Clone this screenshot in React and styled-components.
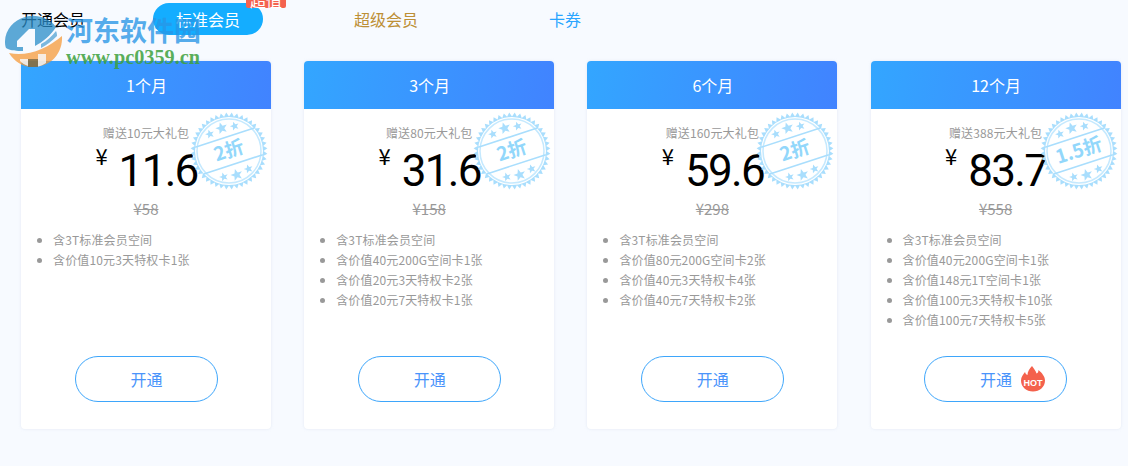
import React from 'react';
import styled, { createGlobalStyle } from 'styled-components';

const FONT = '"Noto Sans CJK SC", "Noto Sans", sans-serif';

const plans = [
  {
    months: '1个月',
    gift: '赠送10元大礼包',
    price: '11.6',
    original: '¥58',
    discount: '2折',
    perks: ['含3T标准会员空间', '含价值10元3天特权卡1张'],
  },
  {
    months: '3个月',
    gift: '赠送80元大礼包',
    price: '31.6',
    original: '¥158',
    discount: '2折',
    perks: ['含3T标准会员空间', '含价值40元200G空间卡1张', '含价值20元3天特权卡2张', '含价值20元7天特权卡1张'],
  },
  {
    months: '6个月',
    gift: '赠送160元大礼包',
    price: '59.6',
    original: '¥298',
    discount: '2折',
    perks: ['含3T标准会员空间', '含价值80元200G空间卡2张', '含价值40元3天特权卡4张', '含价值40元7天特权卡2张'],
  },
  {
    months: '12个月',
    gift: '赠送388元大礼包',
    price: '83.7',
    original: '¥558',
    discount: '1.5折',
    hot: true,
    perks: [
      '含3T标准会员空间',
      '含价值40元200G空间卡1张',
      '含价值148元1T空间卡1张',
      '含价值100元3天特权卡10张',
      '含价值100元7天特权卡5张',
    ],
  },
];

const GlobalStyle = createGlobalStyle`
  html, body {
    margin: 0;
    padding: 0;
    background: #f7faff;
    font-family: ${FONT};
  }
`;

const Page = styled.div`
  position: relative;
  width: 1128px;
  height: 466px;
  overflow: hidden;
  padding: 3px 7px 0 21px;
  box-sizing: border-box;
  background: #f7faff;
`;

const Tabs = styled.nav`
  display: flex;
  align-items: center;
  height: 32px;
  margin-bottom: 26px;
  font-size: 16px;
`;

const TabTitle = styled.span`
  width: 132px;
  color: #000;
`;

const Tab = styled.span`
  position: relative;
  display: flex;
  align-items: center;
  justify-content: center;
  width: ${props => props.width}px;
  height: 32px;
  margin-right: ${props => props.gap}px;
  border-radius: 16px;
  color: ${props => props.color};
  background: ${props => props.bg || 'transparent'};
`;

const Badge = styled.span`
  position: absolute;
  top: -11px;
  left: 93px;
  width: 40px;
  height: 16px;
  border-radius: 2px;
  background: #f4624f;
  color: #fff;
  font-size: 16px;
  line-height: 16px;
  text-align: center;
`;

const Cards = styled.div`
  display: flex;
  gap: 33.2px;
`;

const Card = styled.section`
  position: relative;
  display: flex;
  flex-direction: column;
  width: 250px;
  height: 368px;
  border-radius: 4px;
  background: #fff;
  box-shadow: 0 0 3px rgba(190, 200, 220, 0.35);
`;

const CardHead = styled.header`
  height: 48px;
  padding-left: 1px;
  line-height: 48px;
  border-radius: 4px 4px 0 0;
  background: linear-gradient(100deg, #33a6ff, #4183ff);
  color: #fff;
  font-size: 16px;
  text-align: center;
`;

const CardBody = styled.div`
  display: flex;
  flex-direction: column;
  flex: 1;
  padding: 15px 0 27px;
`;

const Gift = styled.div`
  height: 17px;
  color: #999;
  font-size: 12px;
  line-height: 17px;
  letter-spacing: 0.15px;
  text-align: center;
`;

const PriceRow = styled.div`
  display: flex;
  justify-content: center;
  height: 50px;
  margin-top: 2px;
  color: #000;
`;

const Currency = styled.span`
  margin: -2px 11px 0 1px;
  font-size: 22px;
  line-height: 28px;
`;

const Amount = styled.span`
  margin-top: 3px;
  font-family: Roboto, "Noto Sans", sans-serif;
  font-size: 44px;
  font-weight: 400;
  line-height: 50px;
  letter-spacing: -1.7px;
`;

const Original = styled.div`
  margin-top: 6px;
  color: #999;
  font-size: 15px;
  line-height: 20px;
  text-align: center;
  text-decoration: line-through;
`;

const Perks = styled.ul`
  margin: 11px 0 0;
  padding: 0 0 0 32px;
  color: #999;
  font-size: 12px;
  line-height: 20px;
  letter-spacing: 0.15px;
`;

const OpenButton = styled.button`
  position: relative;
  align-self: center;
  width: 143px;
  height: 46px;
  margin-top: auto;
  padding: 0 0 0 1px;
  border: 1px solid #3ea6fb;
  border-radius: 23px;
  background: #fff;
  color: #4a94fb;
  font-family: ${FONT};
  font-size: 16px;
`;

const HotMark = styled.svg`
  position: absolute;
  top: 8px;
  left: 96px;
`;

const StampMark = styled.svg`
  position: absolute;
  top: 50px;
  left: 168px;
`;

const Watermark = styled.div`
  position: absolute;
  top: 15px;
  left: 5px;
  display: flex;
  pointer-events: none;
`;

const WatermarkText = styled.div`
  margin: 0 0 0 3px;
  font-family: "Liberation Serif", "Noto Sans CJK SC", serif;
  font-weight: 700;
`;

const WatermarkTitle = styled.div`
  color: rgba(40, 150, 230, 0.78);
  font-family: "Noto Sans CJK SC", serif;
  font-size: 27px;
  line-height: 30px;
`;

const WatermarkUrl = styled.div`
  color: rgba(60, 160, 60, 0.85);
  font-size: 20.3px;
  line-height: 24px;
`;

const Stamp = ({ label }) => {
  const c = 40;
  const teeth = [];
  const count = 44;
  for (let i = 0; i < count; i += 1) {
    const a = (i / count) * Math.PI * 2;
    const b = ((i + 0.5) / count) * Math.PI * 2;
    const d = ((i + 1) / count) * Math.PI * 2;
    teeth.push(
      `${c + 34.5 * Math.cos(a)},${c + 34.5 * Math.sin(a)}`,
      `${c + 38.5 * Math.cos(b)},${c + 38.5 * Math.sin(b)}`,
      `${c + 34.5 * Math.cos(d)},${c + 34.5 * Math.sin(d)}`,
    );
  }
  const star = 'M0,-5 L1.4,-1.6 5,-1.5 2.2,0.7 3.1,4.2 0,2.2 -3.1,4.2 -2.2,0.7 -5,-1.5 -1.4,-1.6Z';
  return (
    <StampMark width="80" height="80" viewBox="0 0 80 80">
      <polygon points={teeth.join(' ')} fill="#a9defd" />
      <circle cx={c} cy={c} r="34" fill="#fff" />
      <circle cx={c} cy={c} r="32" fill="none" stroke="#c5e9fe" strokeWidth="1.5" />
      <g transform={`rotate(-18 ${c} ${c})`}>
        <path d="M9,26 H71 M9,54 H71" stroke="#a9defd" strokeWidth="1.6" />
        <g fill="#a9defd">
          <path d={star} transform="translate(27 18) scale(0.9)" />
          <path d={star} transform="translate(40 16) scale(1.2)" />
          <path d={star} transform="translate(53 18) scale(0.9)" />
          <path d={star} transform="translate(27 63) scale(0.9)" />
          <path d={star} transform="translate(40 65) scale(1.2)" />
          <path d={star} transform="translate(53 63) scale(0.9)" />
        </g>
        <text x={c} y="46" fill="#92d7fb" fontFamily={FONT} fontSize="19" fontWeight="700" textAnchor="middle">
          {label}
        </text>
      </g>
    </StampMark>
  );
};

const Hot = () => (
  <HotMark width="24" height="27" viewBox="0 0 24 27">
    <path
      d="M11,1 C13,4 15,6 15.5,8.5 C17,8 17.5,6.5 17.5,5 C21,8 24,11.5 24,15.5 C24,22 18.6,26.5 12,26.5 C5.4,26.5 0,22 0,15.5 C0,12 2,9.5 4,7 C4.5,8.5 5,9.5 6.5,10 C6.5,6.5 8.5,3.5 11,1Z"
      fill="#f4614c"
    />
    <text x="12" y="20.5" fill="#fff" fontFamily="Liberation Sans, sans-serif" fontSize="9" fontWeight="700" textAnchor="middle">
      HOT
    </text>
  </HotMark>
);

const WatermarkLogo = () => (
  <svg width="58" height="52" viewBox="0 0 58 52">
    <path d="M0,26 A28,26 0 0 1 51,12 C46,20 38,27 30,31 V14 H24 L12,26 V32 H18 V36 C12,36 6,36 1,33 C0,31 0,28 0,26Z" fill="rgba(40,140,200,0.75)" />
    <path d="M36,29 C42,26 47,21 51,16 C52,18 52,20 52,21 C47,26 42,30 36,33Z" fill="rgba(40,140,200,0.6)" />
    <path d="M4,38 C22,42 42,34 57,21 C58,38 46,52 28,52 C17,52 9,46 4,38Z" fill="rgba(245,150,50,0.72)" />
    <path d="M15,44 H23 V51 C20,50 17,48 15,46Z M33,39 H41 V48 C38,50 36,51 33,51.5Z" fill="#f7faff" opacity="0.8" />
    <path d="M23,44 H33 V52 H23Z" fill="rgba(110,100,70,0.75)" />
  </svg>
);

const App = () => (
  <Page>
    <GlobalStyle />
    <Tabs>
      <TabTitle>开通会员</TabTitle>
      <Tab width={110} gap={72} color="#fff" bg="#14adff">
        标准会员
        <Badge>超值</Badge>
      </Tab>
      <Tab width={102} gap={112} color="#bd8f36">超级会员</Tab>
      <Tab width={32} gap={0} color="#2aa5ff">卡券</Tab>
    </Tabs>
    <Cards>
      {plans.map(plan => (
        <Card key={plan.months}>
          <CardHead>{plan.months}</CardHead>
          <CardBody>
            <Gift>{plan.gift}</Gift>
            <PriceRow>
              <Currency>¥</Currency>
              <Amount>{plan.price}</Amount>
            </PriceRow>
            <Original>{plan.original}</Original>
            <Perks>
              {plan.perks.map(perk => (
                <li key={perk}>{perk}</li>
              ))}
            </Perks>
            <OpenButton>
              开通
              {plan.hot && <Hot />}
            </OpenButton>
          </CardBody>
          <Stamp label={plan.discount} />
        </Card>
      ))}
    </Cards>
    <Watermark>
      <WatermarkLogo />
      <WatermarkText>
        <WatermarkTitle>河东软件园</WatermarkTitle>
        <WatermarkUrl>www.pc0359.cn</WatermarkUrl>
      </WatermarkText>
    </Watermark>
  </Page>
);

export default App;
